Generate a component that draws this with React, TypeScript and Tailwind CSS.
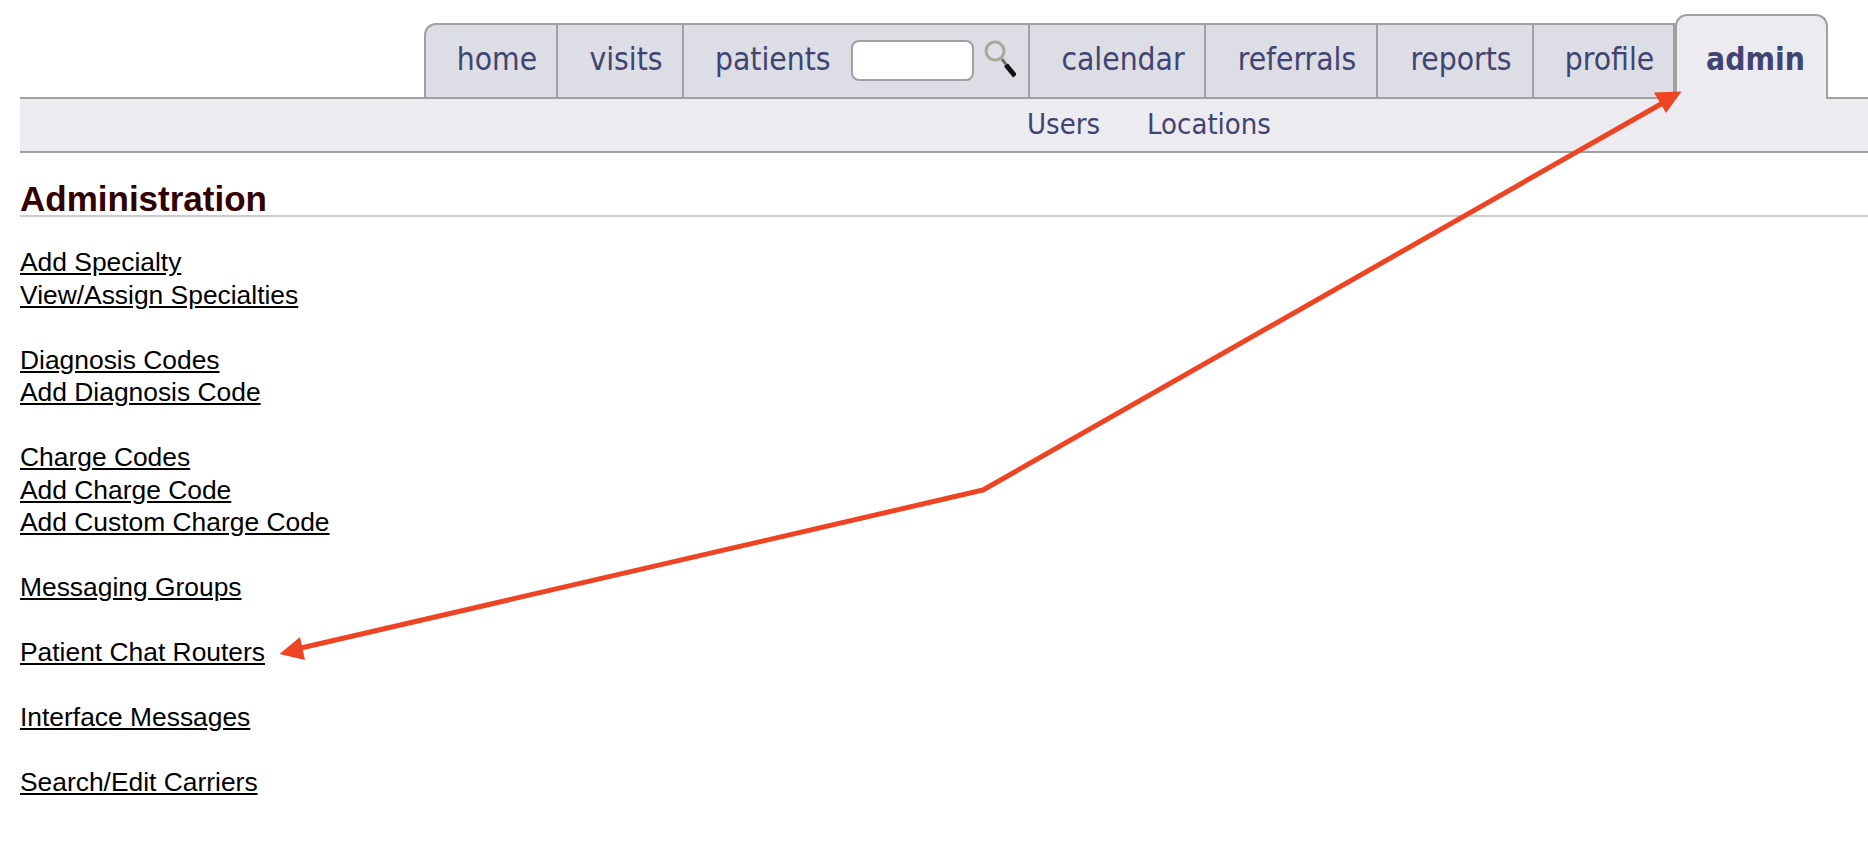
const navTabs = [
  { label: 'calendar', width: 'w-[176px]' },
  { label: 'referrals', width: 'w-[172px]' },
  { label: 'reports', width: 'w-[156px]' },
  { label: 'profile', width: 'w-[141px]' },
]

const linkGroups = [
  ['Add Specialty', 'View/Assign Specialties'],
  ['Diagnosis Codes', 'Add Diagnosis Code'],
  ['Charge Codes', 'Add Charge Code', 'Add Custom Charge Code'],
  ['Messaging Groups'],
  ['Patient Chat Routers'],
  ['Interface Messages'],
  ['Search/Edit Carriers'],
]

function Tab({ label, width, first }: { label: string; width: string; first?: boolean }) {
  return (
    <a className={`flex h-[74px] items-center justify-center border-t-2 border-r-2 border-[#a0a0a0] bg-[#dcdde5] pb-[2px] pl-[12px] ${width} ${first ? 'rounded-tl-xl border-l-2' : ''}`}>
      {label}
    </a>
  )
}

function SearchIcon() {
  return (
    <svg width="34" height="42" viewBox="0 0 34 42" className="ml-[8px]">
      <circle cx="13" cy="12" r="9" fill="#e4e5ea" fillOpacity="0.5" stroke="#a8a89c" strokeWidth="3" />
      <path d="M20 20 L25 27" stroke="#6b6b60" strokeWidth="3" />
      <path d="M24 26 L33 37" stroke="#111111" strokeWidth="5" />
    </svg>
  )
}

function Arrows() {
  return (
    <svg width="1868" height="860" viewBox="0 0 1868 860" className="pointer-events-none absolute top-0 left-0 z-20">
      <path d="M288 651 L983 490 L1668 100" fill="none" stroke="#ee4423" strokeWidth="5" strokeLinejoin="round" />
      <polygon points="1681.5,91.5 1654,92.5 1666,113" fill="#ee4423" />
      <polygon points="279.5,654 300,637 305,660" fill="#ee4423" />
    </svg>
  )
}

export default function App() {
  return (
    <div className="relative h-[860px] w-[1868px] overflow-hidden bg-white pl-[20px] font-['Liberation_Sans',sans-serif]">
      <header className="font-['DejaVu_Sans',sans-serif] text-[#414470]">
        <nav className="flex h-[97px] items-end pl-[404px] text-[31.5px] [font-stretch:condensed]">
          <Tab label="home" width="w-[134px]" first />
          <Tab label="visits" width="w-[126px]" />
          <div className="flex h-[74px] w-[346px] items-center border-t-2 border-r-2 border-[#a0a0a0] bg-[#dcdde5] pl-[31px] pb-[2px]">
            <span>patients</span>
            <input className="ml-[20px] h-[41px] w-[123px] rounded-lg border-2 border-[#a0a0a0] bg-white" />
            <SearchIcon />
          </div>
          {navTabs.map((t) => (
            <Tab key={t.label} label={t.label} width={t.width} />
          ))}
          <a className="relative z-10 -mb-[2px] flex h-[85px] w-[153px] justify-center rounded-t-xl border-x-2 border-t-2 border-[#a0a0a0] bg-[#ebebf0] pt-[20px] pl-[8px] font-bold">
            admin
          </a>
        </nav>
        <div className="flex h-[56px] items-center gap-[47px] border-y-2 border-[#a0a0a0] bg-[#ebebf0] pl-[1007px] text-[29px] [font-stretch:condensed]">
          <a>Users</a>
          <a>Locations</a>
        </div>
      </header>

      <h1 className="mt-[30px] border-b-2 border-[#cccccc] text-[35px] leading-[32px] font-bold text-[#330000]">Administration</h1>

      <main className="mt-[29px] flex flex-col gap-[32.5px] text-[26.4px] leading-[32.5px] text-black">
        {linkGroups.map((group, i) => (
          <div key={i} className="flex flex-col items-start">
            {group.map((link) => (
              <a key={link} className="underline">{link}</a>
            ))}
          </div>
        ))}
      </main>

      <Arrows />
    </div>
  )
}
